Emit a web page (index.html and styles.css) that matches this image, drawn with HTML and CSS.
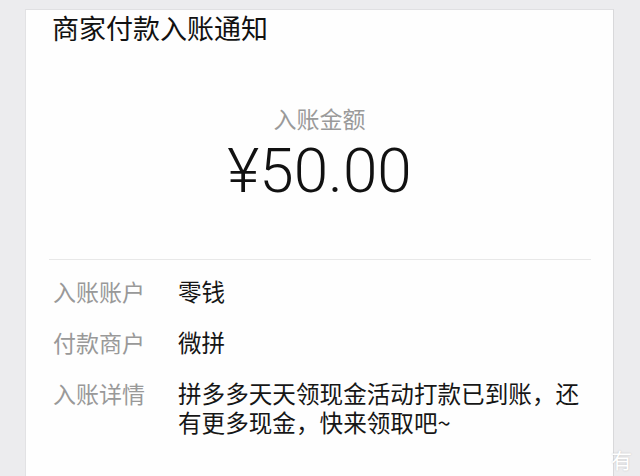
FILE: index.html
```html
<!DOCTYPE html>
<html>
  <head>
    <meta charset="utf-8">
    <link rel="stylesheet" href="styles.css">
  </head>
  <body>
    <div class="page">
      <div class="card">
        <div class="title">商家付款入账通知</div>

        <div class="amount">
          <div class="amount-label">入账金额</div>
          <div class="amount-value">¥50.00</div>
        </div>

        <div class="details">
          <div class="row">
            <span class="label">入账账户</span>
            <span class="value">零钱</span>
          </div>
          <div class="row">
            <span class="label">付款商户</span>
            <span class="value">微拼</span>
          </div>
          <div class="row">
            <span class="label">入账详情</span>
            <span class="value">拼多多天天领现金活动打款已到账，还有更多现金，快来领取吧~</span>
          </div>
        </div>
      </div>

      <span class="watermark">有</span>
    </div>
  </body>
</html>
```

FILE: styles.css
```css
html,
body {
  margin: 0;
  height: 100%;
}
body {
  background: #ececee;
  font-family: "Noto Sans CJK SC", "Noto Sans", sans-serif;
  overflow: hidden;
}
.page {
  position: relative;
  height: 476px;
  padding-top: 9px;
  box-sizing: border-box;
}
.card {
  margin-left: 25px;
  width: 589px;
  height: 467px;
  box-sizing: border-box;
  background: #fefefe;
  border-top: 1px solid #e0e0e2;
  border-left: 1px solid #e2e2e4;
  border-right: 1px solid #d8d8da;
}
.title {
  padding-left: 26px;
  font-size: 27px;
  line-height: 36px;
  color: #111;
}
.amount {
  text-align: center;
}
.amount-label {
  margin-top: 57px;
  font-size: 23px;
  line-height: 30px;
  color: #9a9a9a;
}
.amount-value {
  margin-top: 3px;
  font-family: Roboto, "Liberation Sans", sans-serif;
  font-weight: 300;
  font-size: 62px;
  line-height: 70px;
  color: #111;
}
.details {
  margin: 53px 22px 0 23px;
  padding: 17px 0 0 4px;
  border-top: 1px solid #e8e8e8;
  display: flex;
  flex-direction: column;
  gap: 22px;
}
.row {
  display: flex;
  align-items: flex-start;
  line-height: 29px;
}
.label {
  flex: 0 0 125px;
  font-size: 23px;
  color: #999;
}
.value {
  width: 413px;
  font-size: 23.6px;
  color: #161616;
}
.watermark {
  position: absolute;
  left: 611px;
  top: 446px;
  font-size: 21px;
  line-height: 26px;
  color: #fff;
  text-shadow: 0 0 2px rgba(0, 0, 0, 0.2);
}
```
